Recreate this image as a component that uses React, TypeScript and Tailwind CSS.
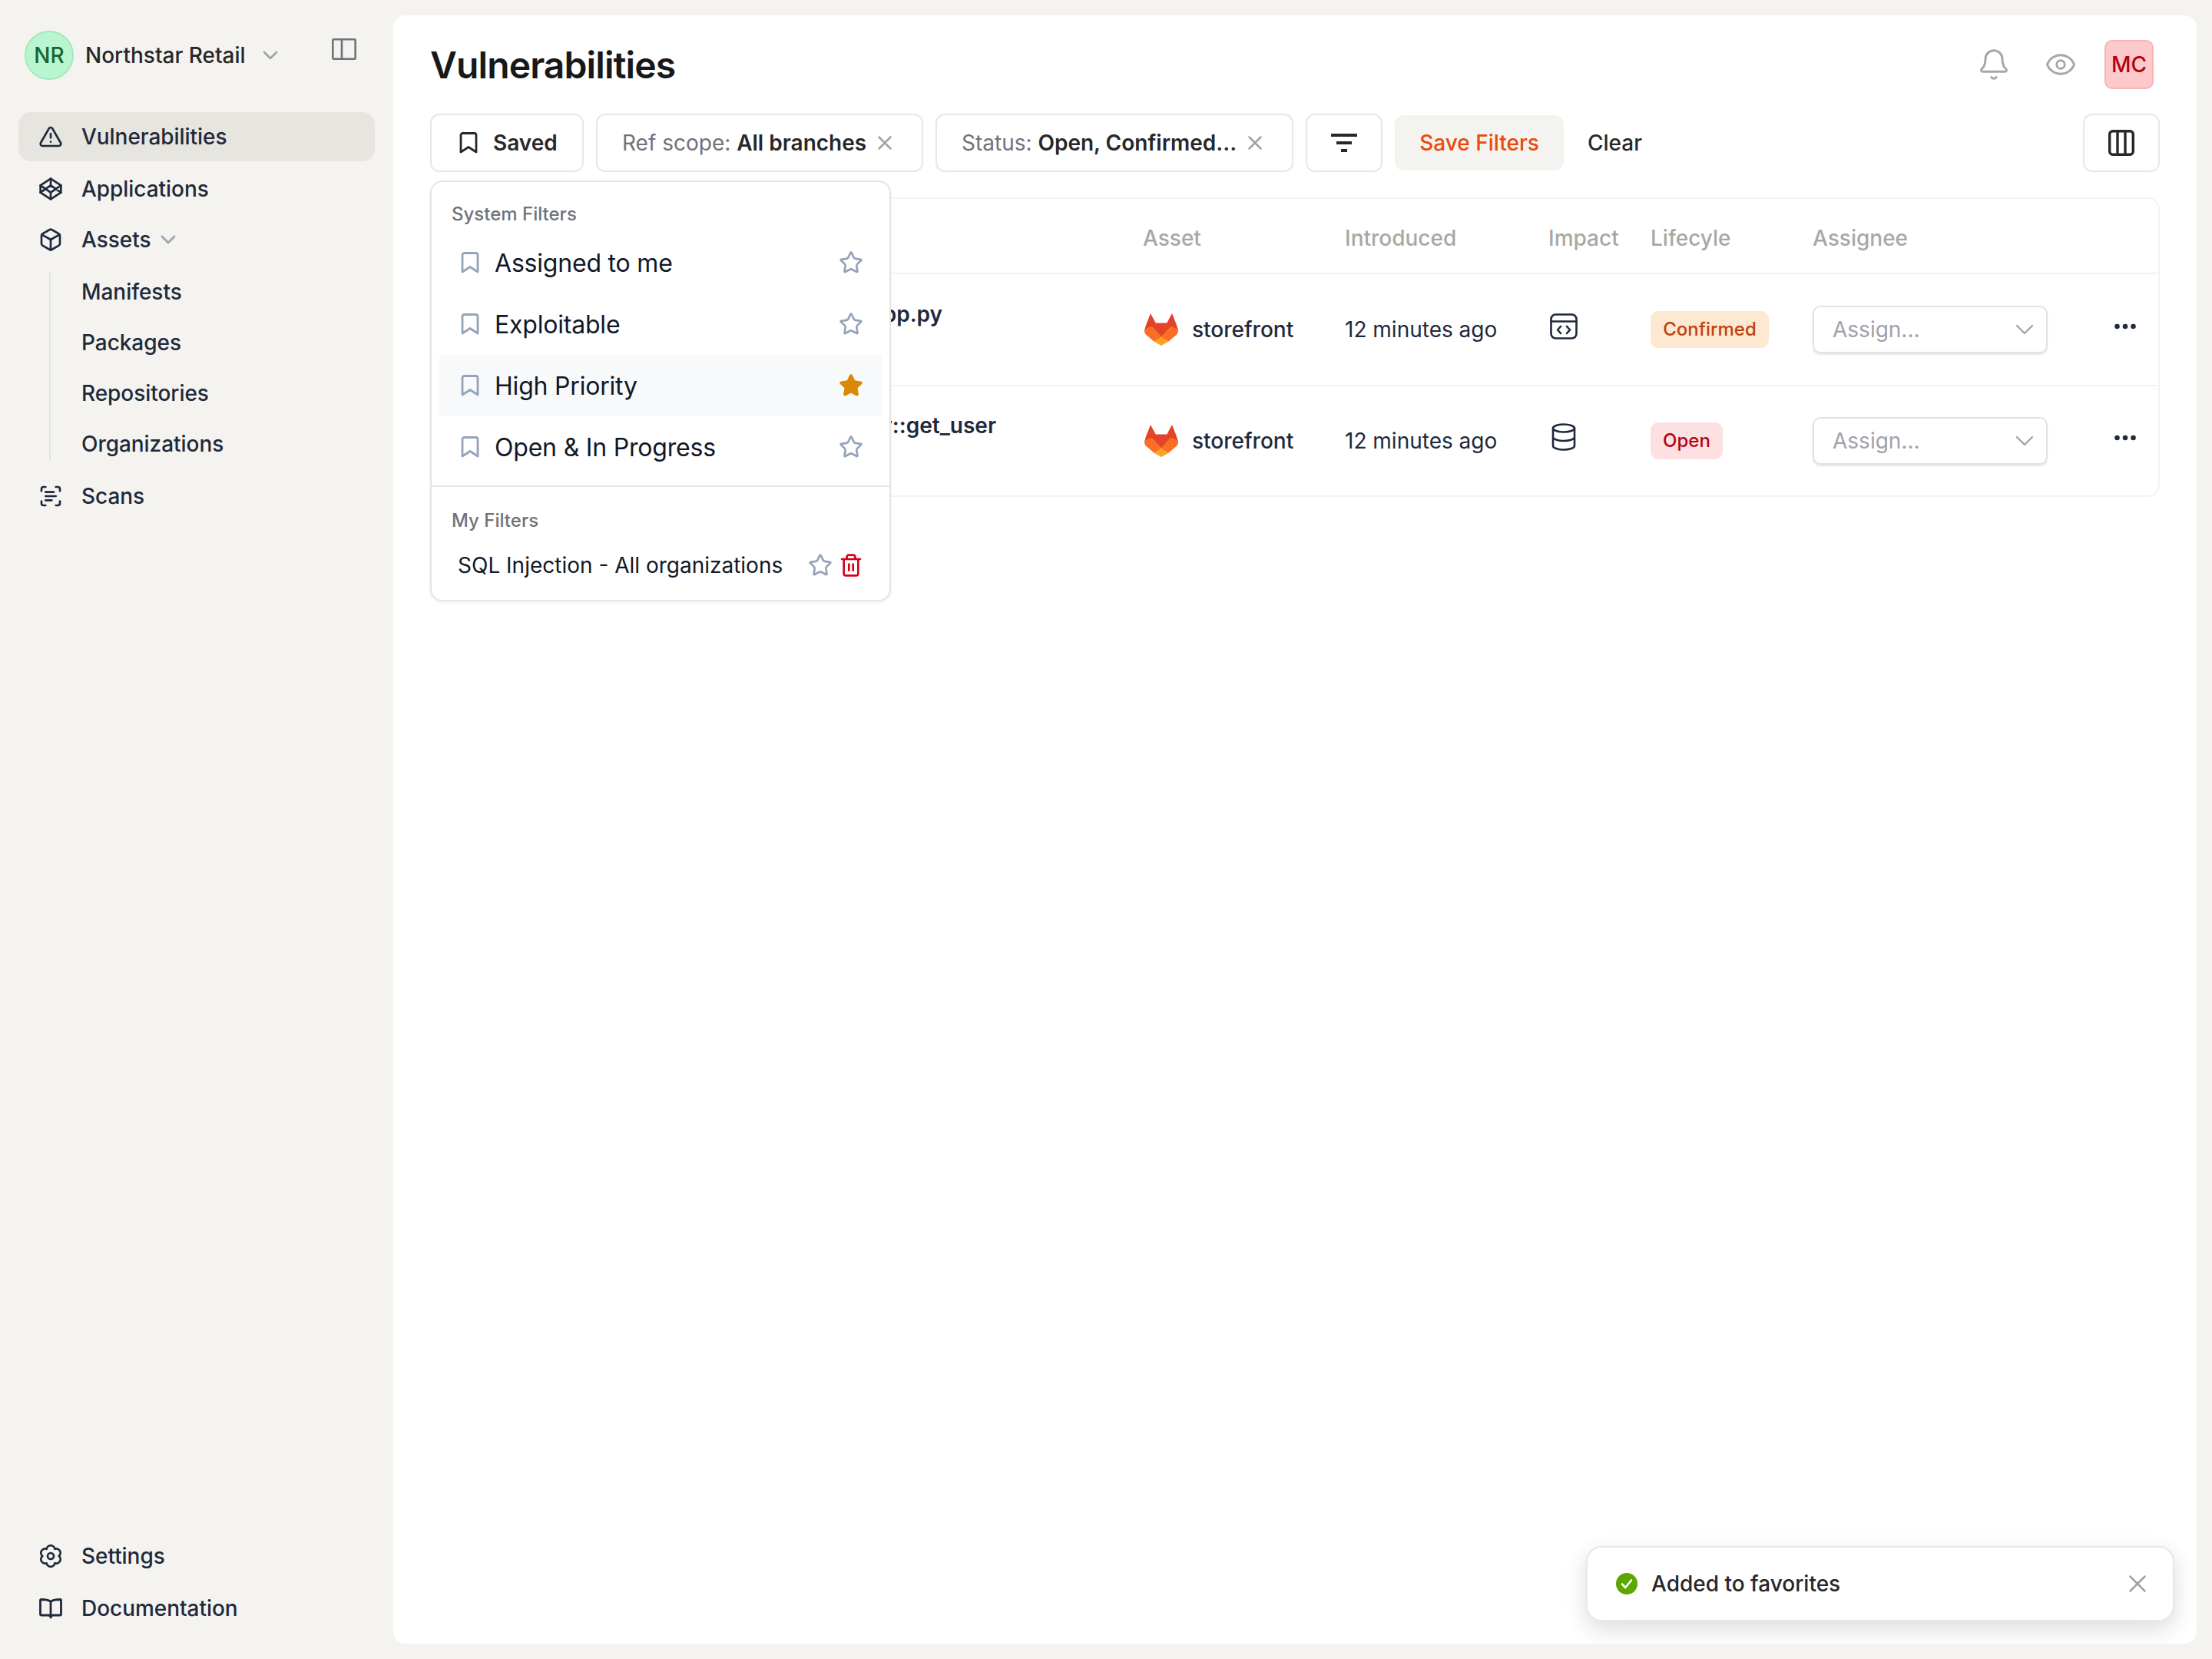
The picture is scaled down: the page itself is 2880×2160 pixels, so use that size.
import React from "react";
import { TriangleAlert, Box, ScanText, ChevronDown, Bell, Eye, X, Star, Trash2, Ellipsis } from "lucide-react";

function Bookmark({ className }: { className: string }) {
  return (
    <svg viewBox="0 0 24 28" width="24" height="28" fill="none" stroke="currentColor" strokeWidth="2.8" strokeLinejoin="round" className={className}>
      <path d="M2 4a2.5 2.5 0 0 1 2.5-2.5h15A2.5 2.5 0 0 1 22 4v22l-10-6.5L2 26z" />
    </svg>
  );
}

function CodeIcon() {
  return (
    <svg viewBox="0 0 24 24" width="32" height="32" fill="none" stroke="currentColor" strokeWidth="2" strokeLinecap="round" strokeLinejoin="round">
      <path d="M12 2l10 6.5v7L12 22 2 15.5v-7z" />
      <path d="M12 22v-6.5M22 8.5l-10 7-10-7M2 15.5l10-7 10 7M12 2v6.5" />
    </svg>
  );
}

function GearIcon() {
  return (
    <svg viewBox="0 0 24 24" width="32" height="32" fill="none" stroke="currentColor" strokeWidth="2" strokeLinecap="round" strokeLinejoin="round">
      <path d="M8 5.07A4.05 4.05 0 0 1 16 5.07A4.05 4.05 0 0 1 20 12A4.05 4.05 0 0 1 16 18.93A4.05 4.05 0 0 1 8 18.93A4.05 4.05 0 0 1 4 12A4.05 4.05 0 0 1 8 5.07Z" />
      <circle cx="12" cy="12" r="3" />
    </svg>
  );
}

function BookIcon() {
  return (
    <svg viewBox="0 0 30 30" width="30" height="30" fill="none" stroke="currentColor" strokeWidth="2.8" strokeLinecap="round" strokeLinejoin="round">
      <path d="M15 6.500C13 4 9 3.500 2.500 3.500a1 1 0 0 0-1 1V23a1 1 0 0 0 1 1H12a3 3 0 0 1 3 3 3 3 0 0 1 3-3h9.500a1 1 0 0 0 1-1V4.500a1 1 0 0 0-1-1C21 3.500 17 4 15 6.500z M15 6.500V27" />
    </svg>
  );
}

function PanelIcon() {
  return (
    <svg viewBox="0 0 32 28" width="32" height="28" fill="none" stroke="#71717a" strokeWidth="2.6" strokeLinejoin="round">
      <rect x="1.300" y="1.300" width="29.400" height="25.400" rx="1.500" />
      <path d="M13 1.300v25.400" />
    </svg>
  );
}

function GitLab() {
  return (
    <svg viewBox="0 0 44 42" width="44" height="42" className="shrink-0">
      <path fill="#e24329" d="M8 0l6.700 12.400h14.600L36 0l5.500 14 2.500 8-10 0-12 20-12-20-10 0 2.500-8z" />
      <path fill="#fc6d26" d="M0 22c3-3 6-4.500 10-5l12 13-9 7-10-8.500C0.800 27 0 25 0 22z" />
      <path fill="#fc6d26" d="M44 22c-3-3-6-4.500-10-5L22 30l9 7 10-8.500C43.200 27 44 25 44 22z" />
      <path fill="#fca326" d="M22 30l9 7-9 5-9-5z" />
    </svg>
  );
}

function BrowserCode() {
  return (
    <svg viewBox="0 0 36 34" width="36" height="34" fill="none" stroke="#1e293b" strokeWidth="2.600" strokeLinecap="round" strokeLinejoin="round" className="-mt-2">
      <rect x="1.500" y="1.500" width="33" height="31" rx="6" />
      <path d="M1.500 10.500h33M14 17l-4 4.500 4 4.500M22 17l4 4.500-4 4.500" />
    </svg>
  );
}

function Database() {
  return (
    <svg viewBox="0 0 32 36" width="32" height="36" fill="none" stroke="#1e293b" strokeWidth="2.600" strokeLinecap="round" strokeLinejoin="round" className="ml-[2px] -mt-[10px]">
      <ellipse cx="16" cy="6.500" rx="14" ry="5" />
      <path d="M2 6.500v23c0 2.800 6.300 5 14 5s14-2.200 14-5v-23M2 18c0 2.800 6.300 5 14 5s14-2.200 14-5" />
    </svg>
  );
}

function NavItem({ icon, label, active }: { icon: React.ReactNode; label: string; active?: boolean }) {
  return (
    <div className={`flex h-[64px] items-center rounded-[16px] pl-[26px] ${active ? "bg-[#e6e5df]" : ""}`}>
      <span className="flex w-[32px] justify-center text-[#1e293b]">{icon}</span>
      <span className="ml-[24px] text-[28px] font-medium tracking-[-0.05px] text-[#1e293b]">{label}</span>
    </div>
  );
}

function SubItem({ label }: { label: string }) {
  return (
    <div className="flex h-[66px] items-center pl-[82px] text-[28px] font-medium tracking-[-0.05px] text-[#1e293b]">{label}</div>
  );
}

function SavedRow({ label, fav, hover }: { label: string; fav?: boolean; hover?: boolean }) {
  return (
    <div className={`mx-[10px] flex h-[80px] items-center pl-[28px] pr-[24px] ${hover ? "bg-[#f8f9fb]" : ""}`}>
      <Bookmark className="text-[#94a3b8]" />
      <span className="ml-[20px] flex-1 pt-[2px] text-[32px] tracking-[-0.2px] text-[#111827]">{label}</span>
      {fav ? (
        <Star size={32} className="text-[#d98a04]" fill="#d98a04" />
      ) : (
        <Star size={32} className="text-[#94a3b8]" />
      )}
    </div>
  );
}

function Row({ title, pr, icon, badge }: { title: string; pr: string; icon: React.ReactNode; badge: React.ReactNode }) {
  return (
    <div className="grid h-[146px] grid-cols-[926px_263px_265px_133px_211px_1fr] items-center border-t-2 border-[#f3f3f0] last:h-[144px]">
      <div className={`mb-[40px] overflow-hidden whitespace-nowrap text-right text-[28px] font-semibold text-[#1e293b] ${pr}`}>{title}</div>
      <div className="flex items-center gap-[18px] pl-[2px]">
        <GitLab />
        <span className="text-[28px] font-medium text-[#1e293b]">storefront</span>
      </div>
      <div className="text-[28px] text-[#1e293b]">12 minutes ago</div>
      <div className="pl-[2px]">{icon}</div>
      <div>{badge}</div>
      <div className="flex items-center">
        <div className="flex h-[62px] w-[306px] items-center justify-between rounded-[10px] border-2 border-[#e2e2e2] pl-[24px] pr-[8px] text-[28px] text-[#a1a1aa] shadow-[0_2px_2px_rgba(0,0,0,0.1)]">
          <span>Assign...</span>
          <ChevronDown size={40} strokeWidth={1.4} className="text-[#a1a1aa]" />
        </div>
        <Ellipsis size={36} strokeWidth={2.400} className="ml-[83px] -mt-[8px] text-[#1e293b]" />
      </div>
    </div>
  );
}

export default function App() {
  return (
    <div className="flex h-[2160px] w-[2880px] bg-[#f4f3ef] font-[Inter,sans-serif] antialiased">
      <aside className="flex w-[512px] shrink-0 flex-col px-[24px] pb-[34px] pt-[40px]">
        <div className="flex h-[64px] items-center pl-[8px]">
          <div className="flex h-[64px] w-[64px] items-center justify-center rounded-full border-2 border-[#a3e9bd] bg-[#b9f6cf] text-[28px] font-medium text-[#166534]">NR</div>
          <span className="ml-[15px] text-[28px] font-medium text-[#27272a]">Northstar Retail</span>
          <ChevronDown size={32} className="ml-[16px] text-[#9ca3af]" />
          <span className="ml-[64px] -mt-[16px]"><PanelIcon /></span>
        </div>
        <nav className="mt-[42px] flex flex-col">
          <NavItem active label="Vulnerabilities" icon={<TriangleAlert size={32} />} />
          <div className="mt-[4px]"><NavItem label="Applications" icon={<CodeIcon />} /></div>
          <div className="mt-[2px] flex h-[64px] items-center rounded-[16px] pl-[26px]">
            <span className="flex w-[32px] justify-center text-[#1e293b]"><Box size={32} /></span>
            <span className="ml-[24px] text-[28px] font-medium tracking-[-0.05px] text-[#1e293b]">Assets</span>
            <ChevronDown size={32} className="ml-[7px] text-[#9ca3af]" />
          </div>
          <div className="relative mt-[3px] flex flex-col">
            <div className="absolute bottom-[11px] left-[40px] top-[7px] w-[2px] bg-[#e4e4df]" />
            <SubItem label="Manifests" />
            <SubItem label="Packages" />
            <SubItem label="Repositories" />
            <SubItem label="Organizations" />
          </div>
          <div className="mt-[3px]"><NavItem label="Scans" icon={<ScanText size={32} />} /></div>
        </nav>
        <div className="mt-auto flex flex-col gap-[4px]">
          <NavItem label="Settings" icon={<GearIcon />} />
          <NavItem label="Documentation" icon={<BookIcon />} />
        </div>
      </aside>

      <main className="relative mb-[20px] mt-[20px] flex h-[2120px] w-[2348px] flex-col overflow-hidden rounded-[16px] bg-white px-[48px] pt-[32px]">
        <header className="flex h-[64px] items-center">
          <h1 className="mt-[2px] flex-1 text-[48px] font-semibold tracking-[-0.9px] text-[#18181b]">Vulnerabilities</h1>
          <Bell size={44} strokeWidth={1.6} className="mr-[44px] text-[#a8a8a3]" />
          <Eye size={42} strokeWidth={1.6} className="mr-[36px] text-[#a8a8a3]" />
          <div className="mr-[8px] flex h-[64px] w-[64px] items-center justify-center rounded-[10px] border-2 border-[#f9b4b8] bg-[#fdc9cc] text-[28px] font-medium text-[#b5000f]">MC</div>
        </header>

        <div className="mt-[32px] flex h-[76px] items-center gap-[16px]">
          <div className="flex h-[76px] w-[200px] items-center rounded-[12px] border-2 border-[#e7e7e5] pl-[36px] text-[28px] font-semibold text-[#27272a]">
            <Bookmark className="text-[#27272a]" />
            <span className="ml-[20px]">Saved</span>
          </div>
          <div className="flex h-[76px] w-[426px] items-center whitespace-nowrap rounded-[12px] border-2 border-[#e7e7e5] pl-[32px] text-[28px] text-[#71717a]">
            <span>Ref scope:&nbsp;</span><span className="font-semibold text-[#27272a]">All branches</span>
            <X size={30} strokeWidth={2} className="ml-[9px] text-[#a1a1aa]" />
          </div>
          <div className="flex h-[76px] w-[466px] items-center whitespace-nowrap rounded-[12px] border-2 border-[#e7e7e5] pl-[32px] text-[28px] text-[#71717a]">
            <span>Status:&nbsp;</span><span className="font-semibold text-[#27272a]">Open, Confirmed...</span>
            <X size={30} strokeWidth={2} className="ml-[9px] text-[#a1a1aa]" />
          </div>
          <div className="flex h-[76px] w-[100px] items-center justify-center rounded-[12px] border-2 border-[#e7e7e5]">
            <svg viewBox="0 0 34 24" width="34" height="24" fill="none" stroke="#27272a" strokeWidth="4">
              <path d="M0 2h34M7 12h20M13 22h8" />
            </svg>
          </div>
          <div className="flex h-[72px] w-[220px] items-center justify-center rounded-[12px] bg-[#f4f3ef] text-[28px] font-medium text-[#ea4a0c]">Save Filters</div>
          <div className="ml-[15px] text-[28px] font-medium text-[#27272a]">Clear</div>
          <div className="ml-auto flex h-[76px] w-[100px] items-center justify-center rounded-[12px] border-2 border-[#e7e7e5]">
            <svg viewBox="0 0 34 34" width="34" height="34" fill="none" stroke="#27272a" strokeWidth="3.400" strokeLinejoin="round">
              <rect x="1.700" y="1.700" width="30.600" height="30.600" rx="4" />
              <path d="M12 1.700v30.600M22 1.700v30.600" />
            </svg>
          </div>
        </div>

        <div className="mt-[33px] flex flex-col rounded-[16px] border-2 border-[#f3f3f0]">
          <div className="grid h-[96px] grid-cols-[926px_263px_265px_133px_211px_1fr] items-center pt-[6px] text-[28px] font-medium text-[#a8a8a3]">
            <div />
            <div>Asset</div>
            <div>Introduced</div>
            <div>Impact</div>
            <div>Lifecyle</div>
            <div>Assignee</div>
          </div>
          <Row
            title="app.py"
            pr="pr-[261px]"
            icon={<BrowserCode />}
            badge={<span className="inline-flex h-[48px] w-[154px] items-center justify-center rounded-[10px] bg-[#fde8d2] text-[24px] font-medium text-[#c2410c]">Confirmed</span>}
          />
          <Row
            title="Repository::get_user"
            pr="pr-[191px]"
            icon={<Database />}
            badge={<span className="inline-flex h-[48px] w-[94px] items-center justify-center rounded-[10px] bg-[#fce0e2] text-[24px] font-medium text-[#b5000f]">Open</span>}
          />
        </div>

        {/* Saved filters menu */}
        <div className="absolute left-[48px] top-[215px] flex h-[548px] w-[600px] flex-col rounded-[16px] border-2 border-[#e5e5e5] bg-white shadow-[0_2px_4px_rgba(0,0,0,0.06)]">
          <div className="mb-[5px] mt-[24px] h-[36px] pl-[26px] text-[24px] font-medium leading-[36px] text-[#71717a]">System Filters</div>
          <SavedRow label="Assigned to me" />
          <SavedRow label="Exploitable" />
          <SavedRow label="High Priority" fav hover />
          <SavedRow label="Open & In Progress" />
          <div className="mt-[10px] h-[2px] bg-[#e5e5e5]" />
          <div className="mb-[10px] mt-[26px] h-[36px] pl-[26px] text-[24px] font-medium leading-[36px] text-[#71717a]">My Filters</div>
          <div className="mx-[10px] flex h-[60px] items-center pl-[24px] pr-[24px]">
            <span className="flex-1 text-[28px] text-[#111827]">SQL Injection - All organizations</span>
            <Star size={32} className="text-[#94a3b8]" />
            <Trash2 size={32} className="ml-[8px] text-[#d9001b]" />
          </div>
        </div>

        {/* Toast */}
        <div className="absolute bottom-[29px] right-[29px] flex h-[98px] w-[766px] items-center rounded-[20px] border-2 border-[#e7e7e7] bg-white pl-[37px] pr-[27px] shadow-[0_10px_30px_rgba(0,0,0,0.14)]">
          <svg viewBox="0 0 28 28" width="28" height="28">
            <circle cx="14" cy="14" r="14" fill="#5ca800" />
            <path d="M8 14.500l4.200 4.500L20 9.500" fill="none" stroke="#fff" strokeWidth="2.600" strokeLinecap="round" strokeLinejoin="round" />
          </svg>
          <span className="ml-[18px] flex-1 text-[28px] font-medium text-[#27272a]">Added to favorites</span>
          <X size={38} strokeWidth={1.6} className="text-[#a1a1aa]" />
        </div>
      </main>
    </div>
  );
}
